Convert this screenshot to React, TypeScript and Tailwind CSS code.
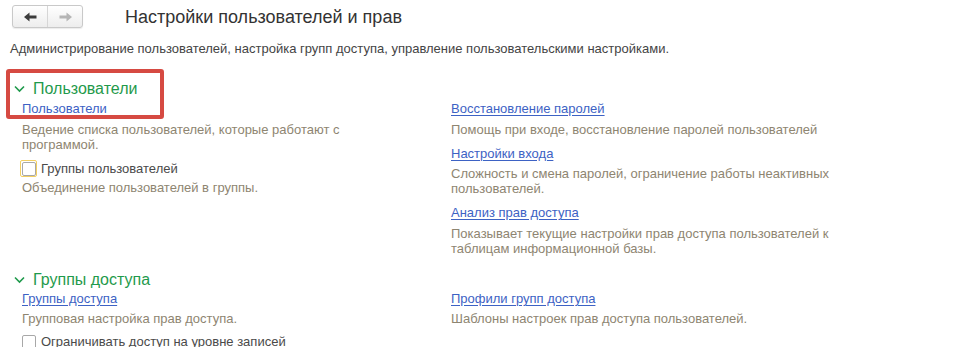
import React from "react";

const linkCls = "block w-fit text-[13px] leading-[15px] text-[#3d62c4] underline underline-offset-2 decoration-[#3d62c4]";
const descCls = "text-[13px] leading-[15px] text-[#8e8571]";

function Arrow({ dir, color }: { dir: "left" | "right"; color: string }) {
    return (
        <svg width="13" height="10" viewBox="0 0 13 10" className={dir === "right" ? "rotate-180" : ""}>
            <path d="M0 5 L5.5 0.5 L5.5 3.6 L12.5 3.6 L12.5 6.4 L5.5 6.4 L5.5 9.5 Z" fill={color} />
        </svg>
    );
}

function Chevron() {
    return (
        <svg width="11" height="8" viewBox="0 0 11 8" className="mr-[8px]">
            <path d="M1 1.5 L5.5 6 L10 1.5" fill="none" stroke="#1f9a4c" strokeWidth="1.6" />
        </svg>
    );
}

function Checkbox({ focused }: { focused?: boolean }) {
    return (
        <div
            className={`w-[17px] h-[17px] flex items-center justify-center rounded-[2px] ${focused ? "border border-[#f2cf62]" : ""
                }`}
        >
            <div className="w-[14px] h-[14px] border border-[#a8a8a8] rounded-[2px] bg-white" />
        </div>
    );
}

function SectionHeader({ title }: { title: string }) {
    return (
        <div className="flex items-center h-[20px] pl-[14px]">
            <Chevron />
            <span className="text-[16px] leading-[20px] text-[#1f9a4c]">{title}</span>
        </div>
    );
}

export default function App() {
    return (
        <div className="relative w-[978px] h-[347px] overflow-hidden bg-white font-['Liberation_Sans',Arial,sans-serif]">
            {/* Header */}
            <div className="flex items-center pt-[5px] pl-[12px]">
                <div className="flex w-[71px] h-[23px] border border-[#c9c9c9] rounded-[3px] bg-gradient-to-b from-white to-[#ededed] shadow-[0_1px_1px_rgba(0,0,0,0.08)]">
                    <div className="flex-1 flex items-center justify-center border-r border-[#d6d6d6]">
                        <Arrow dir="left" color="#3c3c3c" />
                    </div>
                    <div className="flex-1 flex items-center justify-center">
                        <Arrow dir="right" color="#b5b5b5" />
                    </div>
                </div>
                <h1 className="ml-[42px] text-[18px] leading-[22px] text-[#333]">Настройки пользователей и прав</h1>
            </div>

            <p className="mt-[13px] pl-[10px] text-[13px] leading-[15px] text-[#444]">
                Администрирование пользователей, настройка групп доступа, управление пользовательскими настройками.
            </p>

            {/* Пользователи */}
            <div className="mt-[23px]">
                <SectionHeader title="Пользователи" />
                <div className="flex mt-[2px]">
                    <div className="w-[429px] pl-[22px]">
                        <a className={linkCls}>Пользователи</a>
                        <p className={`${descCls} mt-[6px]`}>
                            Ведение списка пользователей, которые работают с
                            <br />
                            программой.
                        </p>
                        <div className="flex items-center gap-[4px] mt-[8px] -ml-[2px]">
                            <Checkbox focused />
                            <span className="text-[13px] leading-[15px] text-[#4a4a4a]">Группы пользователей</span>
                        </div>
                        <p className={`${descCls} mt-[3px]`}>Объединение пользователей в группы.</p>
                    </div>
                    <div className="pl-[22px]">
                        <a className={linkCls}>Восстановление паролей</a>
                        <p className={`${descCls} mt-[6px]`}>Помощь при входе, восстановление паролей пользователей</p>
                        <a className={`${linkCls} mt-[9px]`}>Настройки входа</a>
                        <p className={`${descCls} mt-[5px]`}>
                            Сложность и смена паролей, ограничение работы неактивных
                            <br />
                            пользователей.
                        </p>
                        <a className={`${linkCls} mt-[9px]`}>Анализ прав доступа</a>
                        <p className={`${descCls} mt-[6px]`}>
                            Показывает текущие настройки прав доступа пользователей к
                            <br />
                            таблицам информационной базы.
                        </p>
                    </div>
                </div>
            </div>

            {/* Группы доступа */}
            <div className="mt-[14px]">
                <SectionHeader title="Группы доступа" />
                <div className="flex mt-[1px]">
                    <div className="w-[429px] pl-[22px]">
                        <a className={linkCls}>Группы доступа</a>
                        <p className={`${descCls} mt-[5px]`}>Групповая настройка прав доступа.</p>
                        <div className="flex items-center gap-[4px] mt-[7px] -ml-[2px]">
                            <Checkbox />
                            <span className="text-[13px] leading-[15px] text-[#4a4a4a]">Ограничивать доступ на уровне записей</span>
                        </div>
                    </div>
                    <div className="pl-[22px]">
                        <a className={linkCls}>Профили групп доступа</a>
                        <p className={`${descCls} mt-[5px]`}>Шаблоны настроек прав доступа пользователей.</p>
                    </div>
                </div>
            </div>

            {/* Annotation frame */}
            <div className="absolute left-[6px] top-[69px] w-[158px] h-[50px] border-[4px] border-[#d64a42] rounded-[3px]" />
        </div>
    );
}
